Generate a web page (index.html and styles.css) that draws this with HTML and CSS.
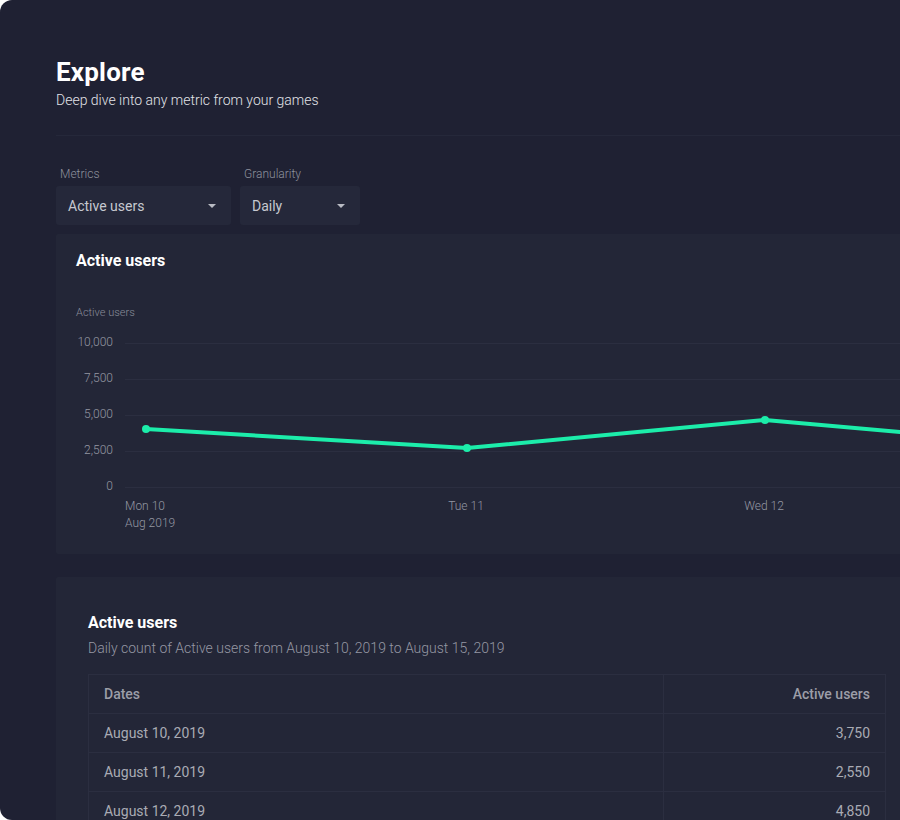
FILE: index.html
```html
<!DOCTYPE html>
<html>
<head>
<meta charset="utf-8">
<link rel="stylesheet" href="styles.css">
</head>
<body>
<div class="panel">
  <header class="page-head">
    <h1 class="title">Explore</h1>
    <p class="subtitle">Deep dive into any metric from your games</p>
  </header>
  <div class="divider"></div>
  <div class="filters">
    <div class="field">
      <span class="field-label">Metrics</span>
      <div class="select select-metric"><span>Active users</span><i class="caret"></i></div>
    </div>
    <div class="field">
      <span class="field-label">Granularity</span>
      <div class="select select-gran"><span>Daily</span><i class="caret"></i></div>
    </div>
  </div>
  <section class="card chart-card">
    <h2 class="card-title">Active users</h2>
    <svg class="chart" width="862" height="264" viewBox="0 0 862 264">
      <text class="axis-title" x="20" y="22">Active users</text>
      <g class="grid">
        <line x1="69" y1="53.5" x2="862" y2="53.5"/>
        <line x1="69" y1="89.5" x2="862" y2="89.5"/>
        <line x1="69" y1="125.5" x2="862" y2="125.5"/>
        <line x1="69" y1="161.5" x2="862" y2="161.5"/>
        <line x1="69" y1="197.5" x2="862" y2="197.5"/>
      </g>
      <g class="ticks">
        <text x="57" y="52">10,000</text>
        <text x="57" y="88">7,500</text>
        <text x="57" y="124">5,000</text>
        <text x="57" y="160">2,500</text>
        <text x="57" y="196">0</text>
      </g>
      <polyline class="series" points="90,139 411,158 709,130 880,145.2"/>
      <g class="dots">
        <circle cx="90" cy="139" r="4"/>
        <circle cx="411" cy="158" r="4"/>
        <circle cx="709" cy="130" r="4"/>
      </g>
      <g class="xlabels">
        <text x="69" y="216">Mon 10</text>
        <text x="69" y="233">Aug 2019</text>
        <text class="mid" x="410" y="216">Tue 11</text>
        <text class="mid" x="708" y="216">Wed 12</text>
      </g>
    </svg>
  </section>
  <section class="card table-card">
    <h2 class="card-title">Active users</h2>
    <p class="card-sub">Daily count of Active users from August 10, 2019 to August 15, 2019</p>
    <table class="data">
      <thead>
        <tr><th class="c-date">Dates</th><th class="c-num">Active users</th></tr>
      </thead>
      <tbody>
        <tr><td class="c-date">August 10, 2019</td><td class="c-num">3,750</td></tr>
        <tr><td class="c-date">August 11, 2019</td><td class="c-num">2,550</td></tr>
        <tr><td class="c-date">August 12, 2019</td><td class="c-num">4,850</td></tr>
      </tbody>
    </table>
  </section>
</div>
</body>
</html>
```
FILE: styles.css
```css
html, body {
  margin: 0;
  padding: 0;
  background: #ffffff;
  overflow: hidden;
  width: 900px;
  height: 820px;
}
body {
  font-family: Roboto, "Liberation Sans", sans-serif;
}
.panel {
  box-sizing: border-box;
  width: 974px;
  height: 820px;
  background: #1f2133;
  border-radius: 12px 0 0 12px;
  padding: 56px 56px 0 56px;
  overflow: hidden;
}
.page-head {
  margin: 0;
}
.title {
  margin: 0;
  font-size: 26px;
  line-height: 32px;
  font-weight: 700;
  color: #ffffff;
  letter-spacing: 0.2px;
}
.subtitle {
  margin: 2px 0 0 0;
  font-size: 14px;
  line-height: 20px;
  font-weight: 300;
  color: #e2e3e8;
}
.divider {
  margin-top: 25px;
  height: 1px;
  background: #25283a;
}
.filters {
  display: flex;
  gap: 9px;
  margin-top: 30px;
}
.field {
  display: flex;
  flex-direction: column;
}
.field-label {
  font-size: 12px;
  line-height: 16px;
  font-weight: 300;
  color: #8e919d;
  padding-left: 4px;
  margin-bottom: 4px;
}
.select {
  box-sizing: border-box;
  height: 39px;
  background: #25283a;
  border-radius: 3px;
  display: flex;
  align-items: center;
  justify-content: space-between;
  padding: 0 15px 0 12px;
  font-size: 14px;
  color: #c6c8d0;
}
.select-metric { width: 175px; }
.select-gran { width: 120px; }
.caret {
  width: 0;
  height: 0;
  border-left: 4px solid transparent;
  border-right: 4px solid transparent;
  border-top: 4px solid #b9bbc3;
  margin-top: 1px;
}
.card {
  background: #232637;
  border-radius: 2px;
}
.chart-card {
  margin-top: 9px;
  height: 320px;
  box-sizing: border-box;
  padding-top: 17px;
}
.chart-card .card-title {
  padding-left: 20px;
}
.card-title {
  margin: 0;
  font-size: 16px;
  line-height: 20px;
  font-weight: 700;
  color: #ffffff;
}
.chart {
  display: block;
  margin-top: 19px;
  font-family: Roboto, "Liberation Sans", sans-serif;
}
.axis-title {
  font-size: 11px;
  font-weight: 300;
  fill: #8a8d99;
  dominant-baseline: central;
}
.grid line {
  stroke: #2b2e40;
  stroke-width: 1;
}
.ticks text {
  font-size: 12px;
  font-weight: 300;
  fill: #9497a2;
  text-anchor: end;
  dominant-baseline: central;
}
.series {
  fill: none;
  stroke: #1cedaa;
  stroke-width: 4;
  stroke-linejoin: round;
  stroke-linecap: round;
}
.dots circle {
  fill: #1cedaa;
}
.xlabels text {
  font-size: 12px;
  font-weight: 300;
  fill: #9497a2;
  dominant-baseline: central;
}
.xlabels text.mid {
  text-anchor: middle;
}
.table-card {
  margin-top: 23px;
  padding: 36px 32px 0 32px;
  height: 300px;
  box-sizing: border-box;
}
.card-sub {
  margin: 5px 0 0 0;
  font-size: 14px;
  line-height: 20px;
  font-weight: 300;
  color: #9597a3;
}
.data {
  margin-top: 16px;
  width: 798px;
  border-collapse: collapse;
  font-size: 14px;
  border: 1px solid #2b2e40;
}
.data th, .data td {
  height: 39px;
  padding: 0 15px;
  border-bottom: 1px solid #2b2e40;
  box-sizing: border-box;
}
.data th {
  font-weight: 500;
  color: #9c9ea8;
}
.data td {
  font-weight: 400;
  color: #a9abb4;
}
.c-date {
  text-align: left;
  width: 575px;
  border-right: 1px solid #2b2e40;
}
.c-num {
  text-align: right;
}
```
